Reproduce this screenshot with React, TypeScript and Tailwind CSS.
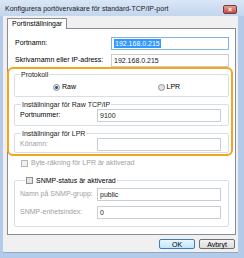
import React from "react";

const font = "font-['Liberation_Sans_Narrow','Liberation_Sans',sans-serif]";

function Field({ value = "", selected = false, focus = false }: { value?: string; selected?: boolean; focus?: boolean }) {
  return (
    <div
      className={`h-[13px] flex items-center px-[2px] bg-white border ${
        focus ? "border-[#7eb4ea]" : "border-[#c9ced5]"
      }`}
    >
      {selected ? (
        <span className="bg-[#3399ff] text-white leading-[9px] px-[1px]">{value}</span>
      ) : (
        <span className="text-[#1a1a1a] leading-[9px]">{value}</span>
      )}
    </div>
  );
}

function Radio({ on = false }: { on?: boolean }) {
  return (
    <span className="w-[7px] h-[7px] rounded-full border border-[#8f9093] bg-[#e4e4e4] flex items-center justify-center">
      {on && <span className="w-[3px] h-[3px] rounded-full bg-[#234b8c]" />}
    </span>
  );
}

function Check({ dim = false }: { dim?: boolean }) {
  return (
    <span
      className={`w-[7px] h-[7px] border ${
        dim ? "border-[#b8b8b8] bg-[#f0f0f0]" : "border-[#8e8f8f] bg-[#e6e6e6]"
      }`}
    />
  );
}

export default function App() {
  return (
    <div className={`relative w-[244px] h-[258px] overflow-hidden flex flex-col bg-[#b3cbe8] text-[7px] ${font}`}>
      {/* title bar */}
      <div className="h-[16px] flex items-center justify-between pl-[5px] pr-[7px] bg-gradient-to-b from-[#d9e6f5] to-[#c3d6ee]">
        <span className="text-[#1b1b1b] leading-none">Konfigurera portövervakare för standard-TCP/IP-port</span>
        <span className="w-[14px] h-[9px] mt-[2px] rounded-[2px] border border-[#7a3a36] bg-gradient-to-b from-[#e1a09a] to-[#c4473c] flex items-center justify-center text-white text-[7px] leading-none font-bold">
          ×
        </span>
      </div>

      {/* body */}
      <div className="flex-1 ml-[3px] mr-[6px] mb-[5px] bg-[#f0f0f0] flex flex-col pl-[4px] pr-[2px] border-b border-[#8ea8c8]">
        <div className="pt-[2px] flex">
          <div className="relative z-10 -mb-px h-[11px] px-[4px] flex items-center bg-white border border-b-0 border-[#898c95] text-black">
            Portinställningar
          </div>
        </div>

        <div className="h-[207px] bg-white border border-[#898c95] flex flex-col">
          {/* top fields */}
          <div className="pt-[8px] pl-[7px] pr-[6px] flex flex-col gap-[4px]">
            <div className="grid grid-cols-[96px_1fr] items-center">
              <span className="text-black">Portnamn:</span>
              <Field value="192.168.0.215" selected focus />
            </div>
            <div className="grid grid-cols-[96px_1fr] items-center">
              <span className="text-black">Skrivarnamn eller IP-adress:</span>
              <Field value="192.168.0.215" />
            </div>
          </div>

          <div className="mx-[6px] mt-[3px] flex flex-col">
            <fieldset className="h-[27px] border border-[#d5dfe5] rounded-[2px] px-[4px]">
              <legend className="ml-[1px] px-[1px] text-[#1a1a1a] leading-[9px]">Protokoll</legend>
              <div className="grid grid-cols-2 pt-[3px]">
                <div className="flex items-center gap-[2px] pl-[34px]">
                  <Radio on />
                  <span className="text-black">Raw</span>
                </div>
                <div className="flex items-center gap-[2px] pl-[36px]">
                  <Radio />
                  <span className="text-black">LPR</span>
                </div>
              </div>
            </fieldset>

            <fieldset className="mt-[3px] h-[26px] border border-[#d5dfe5] rounded-[2px] pl-[5px] pr-[7px]">
              <legend className="ml-[1px] px-[1px] text-[#1a1a1a] leading-[9px]">Inställningar för Raw TCP/IP</legend>
              <div className="grid grid-cols-[77px_1fr] items-center">
                <span className="text-black">Portnummer:</span>
                <Field value="9100" />
              </div>
            </fieldset>

            <fieldset className="mt-[3px] h-[24px] border border-[#d5dfe5] rounded-[2px] pl-[5px] pr-[7px]">
              <legend className="ml-[1px] px-[1px] text-[#1a1a1a] leading-[9px]">Inställningar för LPR</legend>
              <div className="grid grid-cols-[77px_1fr] items-center">
                <span className="text-[#a0a0a0]">Könamn:</span>
                <Field />
              </div>
            </fieldset>

            <div className="mt-[5px] pl-[7px] flex items-center gap-[3px]">
              <Check dim />
              <span className="text-[#a0a0a0]">Byte-räkning för LPR är aktiverad</span>
            </div>

            <fieldset className="mt-[7px] h-[51px] border border-[#d5dfe5] rounded-[2px] pl-[5px] pr-[7px]">
              <legend className="ml-[5px] px-[1px] flex items-center gap-[3px] leading-[9px]">
                <Check />
                <span className="text-black">SNMP-status är aktiverad</span>
              </legend>
              <div className="flex flex-col gap-[5px] pt-[3px]">
                <div className="grid grid-cols-[77px_1fr] items-center">
                  <span className="text-[#a0a0a0]">Namn på SNMP-grupp:</span>
                  <Field value="public" />
                </div>
                <div className="grid grid-cols-[77px_1fr] items-center">
                  <span className="text-[#a0a0a0]">SNMP-enhetsindex:</span>
                  <Field value="0" />
                </div>
              </div>
            </fieldset>
          </div>
        </div>

        <div className="mt-[4px] flex justify-end gap-[4px] pr-[1px]">
          <button className="w-[36px] h-[10px] rounded-[2px] border border-[#3c7fb1] bg-gradient-to-b from-[#eaf6fd] to-[#bee6fd] text-black leading-none">
            OK
          </button>
          <button className="w-[36px] h-[10px] rounded-[2px] border border-[#707070] bg-gradient-to-b from-[#f2f2f2] to-[#dcdcdc] text-black leading-none">
            Avbryt
          </button>
        </div>
      </div>

      {/* highlight overlay */}
      <div className="absolute left-[7px] top-[67px] w-[226px] h-[89px] border-2 border-[#f5a41d] rounded-[6px] pointer-events-none" />
    </div>
  );
}
